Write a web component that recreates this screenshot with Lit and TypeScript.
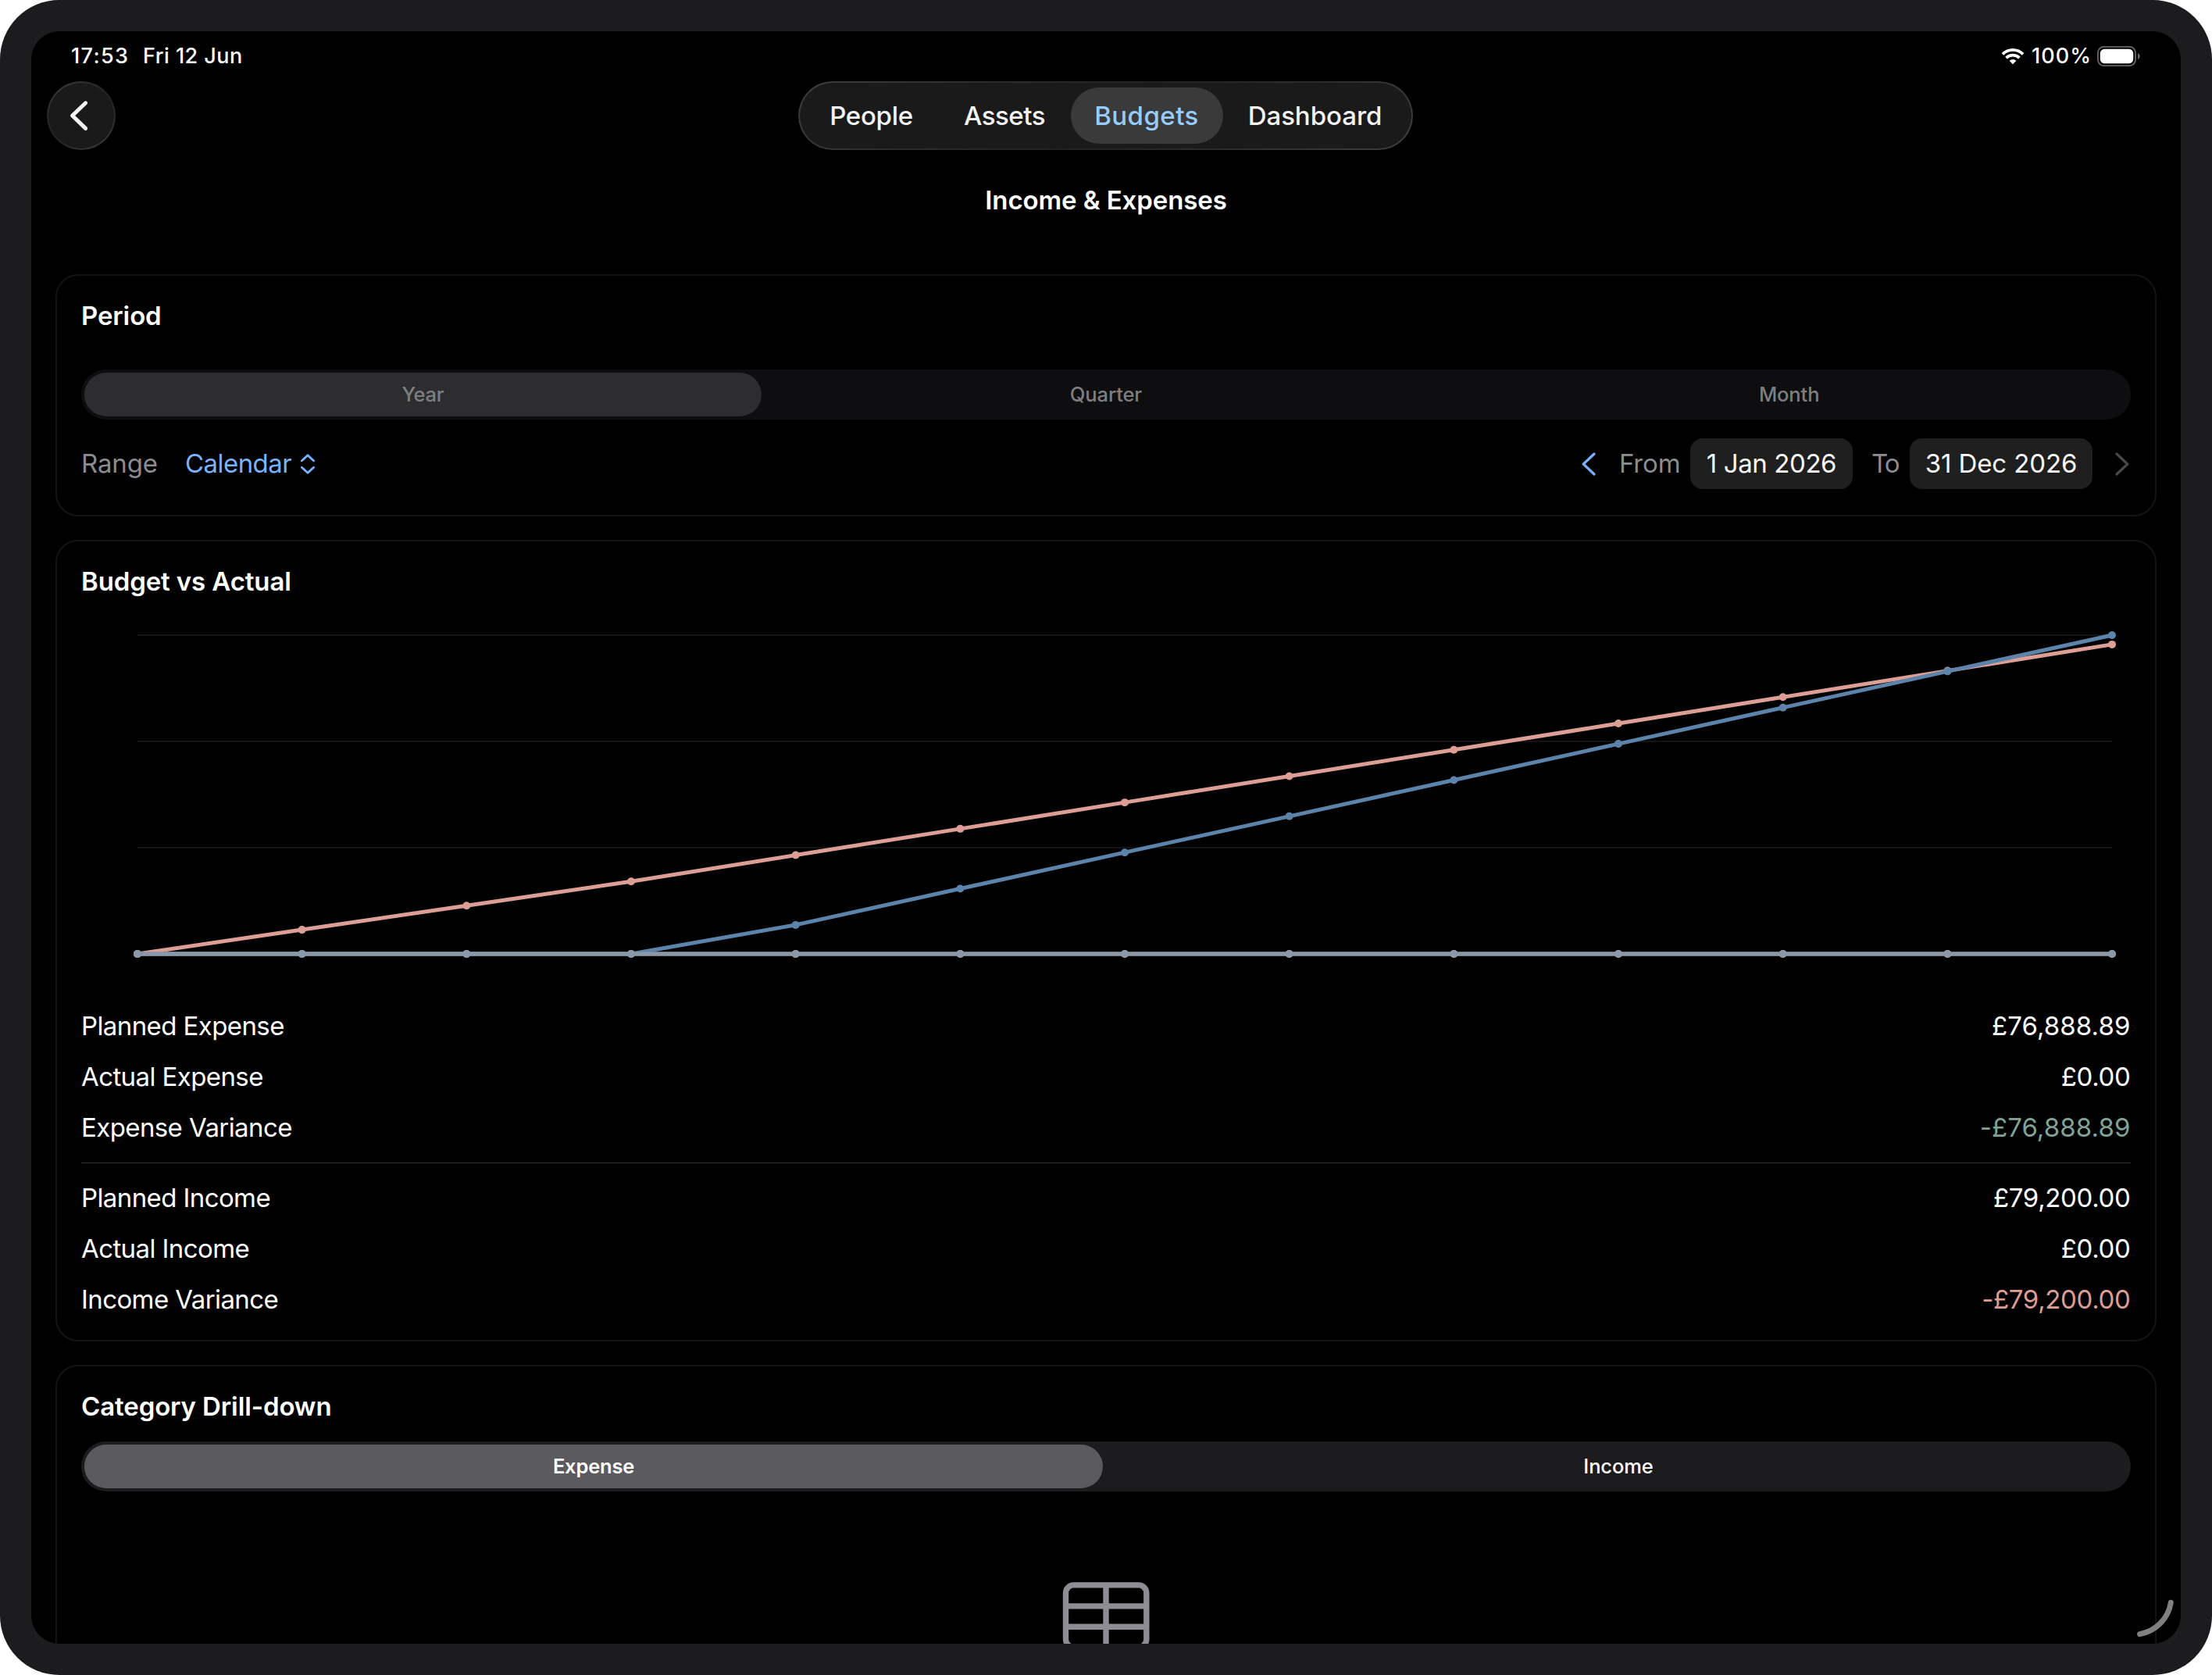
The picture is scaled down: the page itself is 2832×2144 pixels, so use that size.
import { LitElement, html, svg, css } from "lit";
import { customElement, property } from "lit/decorators.js";
import { classMap } from "lit/directives/class-map.js";

interface Series {
  color: string;
  values: number[];
}

interface SummaryRow {
  label: string;
  value: string;
  tone?: "good" | "bad";
  short?: boolean;
}

const MONTHS = 12;

const plannedExpense = Array.from({ length: MONTHS + 1 }, (_, i) =>
  i <= 3 ? i * 6000 : 18000 + ((i - 3) * 58888.89) / 9
);
const plannedIncome = Array.from({ length: MONTHS + 1 }, (_, i) =>
  i <= 3 ? 0 : 7200 + (i - 4) * 9000
);
const flat = Array.from({ length: MONTHS + 1 }, () => 0);

const SERIES: Series[] = [
  { color: "#dd9f95", values: plannedExpense },
  { color: "#c9ad8c", values: flat },
  { color: "#5c84aa", values: plannedIncome },
  { color: "#8b98aa", values: flat },
];

const EXPENSE_ROWS: SummaryRow[] = [
  { label: "Planned Expense", value: "£76,888.89" },
  { label: "Actual Expense", value: "£0.00", short: true },
  { label: "Expense Variance", value: "-£76,888.89", tone: "good" },
];

const INCOME_ROWS: SummaryRow[] = [
  { label: "Planned Income", value: "£79,200.00", short: true },
  { label: "Actual Income", value: "£0.00", short: true },
  { label: "Income Variance", value: "-£79,200.00", tone: "bad", short: true },
];

@customElement("segmented-control")
class SegmentedControl extends LitElement {
  @property({ attribute: false }) options: string[] = [];
  @property({ type: Number }) selected = 0;
  @property({ type: Boolean }) disabled = false;

  static styles = css`
    :host {
      display: block;
    }
    .track {
      display: grid;
      grid-auto-flow: column;
      grid-auto-columns: 1fr;
      gap: 8px;
      height: 64px;
      padding: 4px;
      box-sizing: border-box;
      border-radius: 32px;
      background: #1c1c1e;
      color: #fff;
      font-size: 25.5px;
      font-weight: 500;
      line-height: 56px;
      letter-spacing: -0.1px;
      text-align: center;
    }
    .option {
      border-radius: 28px;
    }
    .on {
      background: #5b5a5f;
      font-weight: 600;
      letter-spacing: -0.2px;
    }
    .disabled {
      background: #0e0e10;
      color: #7e7e80;
      letter-spacing: -0.1px;
    }
    .disabled .on {
      background: #2d2d2f;
      font-weight: 500;
      letter-spacing: -0.3px;
    }
  `;

  render() {
    return html`<div class=${classMap({ track: true, disabled: this.disabled })}>
      ${this.options.map(
        (o, i) => html`<div class=${classMap({ option: true, on: i === this.selected })}>${o}</div>`
      )}
    </div>`;
  }
}

@customElement("budget-chart")
class BudgetChart extends LitElement {
  @property({ attribute: false }) series: Series[] = [];
  @property({ type: Number }) max = 79200;

  static styles = css`
    :host {
      display: block;
      height: 480px;
    }
    svg {
      display: block;
    }
  `;

  private x(i: number) {
    return 72 + (i * 2528) / MONTHS;
  }

  private y(v: number) {
    return 441 - (v / this.max) * 408;
  }

  render() {
    return html`<svg width="2624" height="480" viewBox="0 0 2624 480">
      ${[33, 169, 305, 441].map(
        (y) => svg`<rect x="72" y=${y - 1} width="2528" height="2" fill="#131313" />`
      )}
      ${this.series.map(
        (s) => svg`
          <polyline
            fill="none"
            stroke=${s.color}
            stroke-width="5"
            stroke-linejoin="round"
            points=${s.values.map((v, i) => `${this.x(i)},${this.y(v)}`).join(" ")}
          />
          ${s.values.map((v, i) => svg`<circle cx=${this.x(i)} cy=${this.y(v)} r="5" fill=${s.color} />`)}
        `
      )}
    </svg>`;
  }
}

@customElement("app-root")
class AppRoot extends LitElement {
  static styles = css`
    :host {
      display: block;
      width: 2832px;
      height: 2144px;
      overflow: hidden;
      background: #fff;
      font-family: Inter, "Liberation Sans", sans-serif;
      font-size: 33px;
      color: #fff;
      white-space: nowrap;
    }
    svg {
      display: block;
      flex: none;
    }
    .device {
      position: relative;
      box-sizing: border-box;
      width: 2832px;
      height: 2144px;
      padding: 40px;
      border-radius: 76px;
      background: #1c1c1e;
    }
    .screen {
      height: 2064px;
      overflow: hidden;
      border-radius: 36px;
      background: #000;
    }
    .status {
      display: flex;
      align-items: center;
      height: 64px;
      padding: 0 52px 0 50px;
      font-size: 27px;
      font-weight: 500;
      line-height: 66px;
    }
    .time {
      width: 93px;
      padding-left: 1px;
      letter-spacing: 1.35px;
      box-sizing: border-box;
    }
    .date {
      flex: 1;
      letter-spacing: 0.47px;
    }
    .percent {
      width: 75px;
      margin: 0 8px 0 9px;
      letter-spacing: 1.1px;
    }
    .nav {
      display: grid;
      grid-template-columns: 1fr auto 1fr;
      height: 88px;
      padding: 0 20px;
    }
    .back,
    .tabs {
      box-sizing: border-box;
      border: 2px solid transparent;
      border-radius: 44px;
      background: linear-gradient(#1a1a1a, #1a1a1a) padding-box,
        linear-gradient(145deg, #3e3e3e 0%, #2b2b2b 30%, #222 50%, #2b2b2b 70%, #3e3e3e 100%) border-box;
    }
    .back {
      width: 88px;
      height: 88px;
    }
    .tabs {
      display: flex;
      width: 787px;
      margin-left: -1px;
      margin-right: 1px;
      padding: 6px;
      color: #f3f3f3;
      font-weight: 500;
      line-height: 72px;
      text-align: center;
    }
    .tab {
      box-sizing: border-box;
      border-radius: 36px;
    }
    .people {
      width: 172px;
      letter-spacing: -0.3px;
    }
    .assets {
      width: 169px;
      letter-spacing: -0.5px;
    }
    .budgets {
      width: 195px;
      letter-spacing: 0.45px;
      background: #3a3a3a;
      color: #96ccff;
    }
    .dashboard {
      width: 235px;
      padding-left: 1px;
      letter-spacing: -0.05px;
    }
    .title {
      height: 159px;
      font-weight: 600;
      line-height: 128px;
      letter-spacing: -0.1px;
      text-align: center;
    }
    .cards {
      display: flex;
      flex-direction: column;
      gap: 30px;
      padding: 0 31px;
    }
    .card {
      box-sizing: border-box;
      padding: 31px 31px 0;
      border: 2px solid #131313;
      border-radius: 29px;
    }
    .card-title {
      font-weight: 600;
      line-height: 40px;
      letter-spacing: -0.12px;
    }
    .period {
      height: 310px;
    }
    .period segmented-control {
      margin-top: 49px;
    }
    .range {
      display: flex;
      align-items: center;
      height: 65px;
      margin-top: 24px;
      line-height: 64px;
    }
    .range-text {
      margin-bottom: 1px;
    }
    .muted {
      color: #8b8b91;
    }
    .range-label {
      width: 133px;
      letter-spacing: -0.15px;
    }
    .menu {
      display: flex;
      align-items: center;
      flex: 1;
      gap: 11px;
      color: #79b3ff;
      letter-spacing: -0.55px;
    }
    .from {
      width: 91px;
      margin-left: 29px;
      letter-spacing: -0.15px;
    }
    .to {
      width: 49px;
      margin-left: 24px;
      letter-spacing: -2px;
    }
    .date-pill {
      height: 65px;
      border-radius: 16px;
      background: #1f1f20;
      color: #f8f8f8;
      text-align: center;
    }
    .date-from {
      width: 208px;
      letter-spacing: -0.4px;
    }
    .date-to {
      width: 234px;
      margin-right: 29px;
      letter-spacing: -0.1px;
    }
    .budget {
      height: 1026px;
    }
    .budget budget-chart {
      margin-top: 16px;
    }
    .summary {
      margin-top: 21px;
    }
    .row {
      display: flex;
      justify-content: space-between;
      height: 65px;
      line-height: 64px;
    }
    .label {
      letter-spacing: -0.6px;
    }
    .value {
      letter-spacing: 0.1px;
      margin-right: 0.5px;
    }
    .short {
      letter-spacing: -0.34px;
    }
    .good {
      color: #7fa395;
    }
    .bad {
      color: #de9d92;
    }
    .divider {
      height: 1px;
      margin: 12px 0;
      background: #323234;
    }
    .drill {
      height: 480px;
    }
    .drill segmented-control {
      margin-top: 25px;
    }
    .empty {
      display: flex;
      justify-content: center;
      padding-top: 116px;
    }
    .corner {
      position: absolute;
      left: 2730px;
      top: 2042px;
    }
  `;

  private row(r: SummaryRow) {
    return html`<div class="row">
      <span class="label">${r.label}</span>
      <span
        class=${classMap({ value: true, short: !!r.short, good: r.tone === "good", bad: r.tone === "bad" })}
        >${r.value}</span
      >
    </div>`;
  }

  render() {
    return html`
      <div class="device">
        <div class="screen">
          <div class="status">
            <span class="time">17:53</span>
            <span class="date">Fri 12 Jun</span>
            <svg width="30" height="22" viewBox="0 0 30 22" fill="none" stroke="#fff" stroke-width="3.7">
              <path d="M1.9 8.4A18.4 18.4 0 0 1 28.1 8.4" />
              <path d="M6.5 13.1A11.9 11.9 0 0 1 23.5 13.1" />
              <path d="M15 21.2L10.6 16.8A6.2 6.2 0 0 1 19.4 16.8Z" fill="#fff" stroke="none" />
            </svg>
            <span class="percent">100%</span>
            <svg width="56" height="26" viewBox="0 0 56 26">
              <rect x="1.9" y="0.9" width="48.2" height="24.2" rx="7.6" fill="none" stroke="#666" stroke-width="1.8" />
              <rect x="4.8" y="3.8" width="42.4" height="18.4" rx="5.4" fill="#fff" />
              <path d="M53 9C56.6 10.6 56.6 15.6 53 17.2Z" fill="#666" />
            </svg>
          </div>

          <div class="nav">
            <div class="back">
              <svg width="84" height="84" viewBox="2 2 84 84" fill="none">
                <path
                  d="M49.6 27.8L32.6 44L49.6 60.4"
                  stroke="#f3f3f3"
                  stroke-width="5"
                  stroke-linecap="round"
                  stroke-linejoin="round"
                />
              </svg>
            </div>
            <div class="tabs">
              <div class="tab people">People</div>
              <div class="tab assets">Assets</div>
              <div class="tab budgets">Budgets</div>
              <div class="tab dashboard">Dashboard</div>
            </div>
          </div>

          <div class="title">Income &amp; Expenses</div>

          <div class="cards">
            <section class="card period">
              <div class="card-title">Period</div>
              <segmented-control disabled .options=${["Year", "Quarter", "Month"]}></segmented-control>
              <div class="range">
                <span class="range-text muted range-label">Range</span>
                <div class="menu">
                  <span class="range-text">Calendar</span>
                  <svg width="20" height="28" viewBox="0 0 20 28" fill="none" stroke="#79b3ff" stroke-width="2.9" stroke-linecap="round" stroke-linejoin="round">
                    <path d="M2.4 9.8L10 2.8L17.6 9.8M2.4 18.2L10 25.2L17.6 18.2" />
                  </svg>
                </div>
                <svg width="20" height="32" viewBox="0 0 20 32" fill="none" stroke="#79b3ff" stroke-width="3.2" stroke-linecap="round" stroke-linejoin="round">
                  <path d="M17 3L3.2 16L17 29" />
                </svg>
                <span class="range-text muted from">From</span>
                <div class="date-pill date-from">1 Jan 2026</div>
                <span class="range-text muted to">To</span>
                <div class="date-pill date-to">31 Dec 2026</div>
                <svg width="20" height="32" viewBox="0 0 20 32" fill="none" stroke="#49494b" stroke-width="3.2" stroke-linecap="round" stroke-linejoin="round">
                  <path d="M2 3L15.8 16L2 29" />
                </svg>
              </div>
            </section>

            <section class="card budget">
              <div class="card-title">Budget vs Actual</div>
              <budget-chart .series=${SERIES}></budget-chart>
              <div class="summary">
                ${EXPENSE_ROWS.map((r) => this.row(r))}
                <div class="divider"></div>
                ${INCOME_ROWS.map((r) => this.row(r))}
              </div>
            </section>

            <section class="card drill">
              <div class="card-title">Category Drill-down</div>
              <segmented-control .options=${["Expense", "Income"]}></segmented-control>
              <div class="empty">
                <svg width="112" height="88" viewBox="0 0 112 88" fill="none" stroke="#8e8d93" stroke-width="7.4">
                  <rect x="4.5" y="3.9" width="103.3" height="79.4" rx="10" />
                  <path d="M56 4V83M4.5 30.9H108M4.5 57.2H108" />
                </svg>
              </div>
            </section>
          </div>
        </div>

        <svg class="corner" width="60" height="60" viewBox="0 0 60 60" fill="none">
          <path d="M49.3 9.3A48.6 48.6 0 0 1 9.6 49.6" stroke="#808080" stroke-width="7" stroke-linecap="round" />
        </svg>
      </div>
    `;
  }
}
